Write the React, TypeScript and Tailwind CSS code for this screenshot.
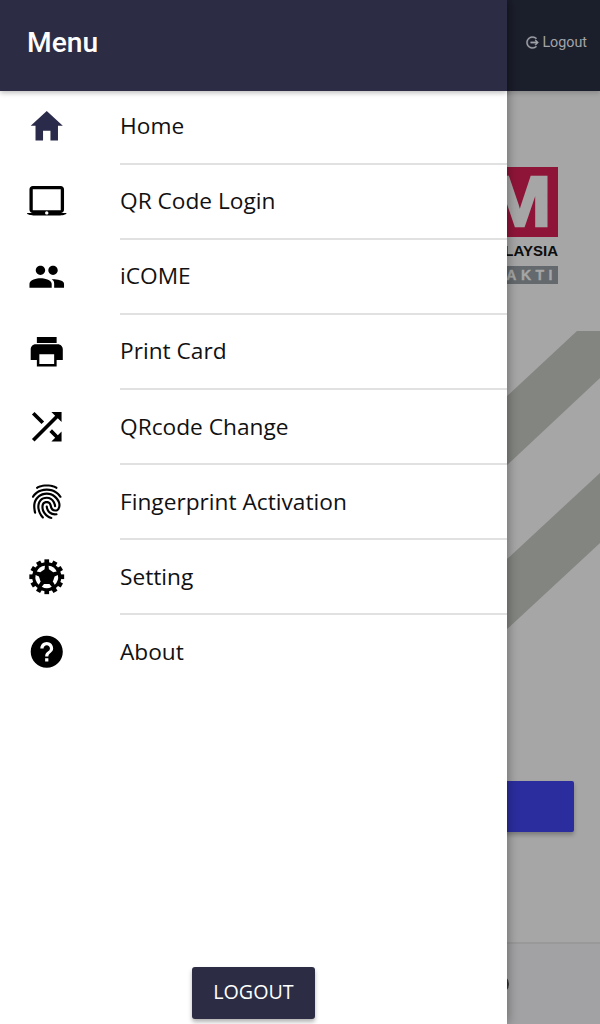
import type { ComponentType } from "react";
import {
  IoMdFingerPrint,
  IoMdHelpCircle,
  IoMdHome,
  IoMdLaptop,
  IoMdLogOut,
  IoMdPeople,
  IoMdPrint,
  IoMdShuffle,
} from "react-icons/io";

type MenuItem = { label: string; icon: ComponentType<{ className?: string }>; active?: boolean };

function GearIcon({ className }: { className?: string }) {
  return (
    <svg className={className} viewBox="-59 -59 118 118" fill="currentColor">
      <circle r="43.5" />
      {[0, 30, 60, 90, 120, 150].map((angle) => (
        <rect key={angle} x="-7" y="-52" width="14" height="104" transform={`rotate(${angle})`} />
      ))}
      {[0, 72, 144, 216, 288].map((angle) => (
        <path key={angle} d="M-8 22H8L15 30Q0 39-15 30Z" fill="white" transform={`rotate(${angle})`} />
      ))}
    </svg>
  );
}

const items: MenuItem[] = [
  { label: "Home", icon: IoMdHome, active: true },
  { label: "QR Code Login", icon: IoMdLaptop },
  { label: "iCOME", icon: IoMdPeople },
  { label: "Print Card", icon: IoMdPrint },
  { label: "QRcode Change", icon: IoMdShuffle },
  { label: "Fingerprint Activation", icon: IoMdFingerPrint },
  { label: "Setting", icon: GearIcon },
  { label: "About", icon: IoMdHelpCircle },
];

function Logo() {
  return (
    <div className="ml-auto mr-[42px] mt-[76px] flex h-[117px] w-[150px] flex-col items-end font-['Liberation_Sans',sans-serif] font-bold">
      <div className="flex h-[70px] w-[150px] shrink-0 items-center justify-end bg-[#8f1538] pr-[7px] text-[70px] leading-[70px] text-[#a6a6a6]">
        <span className="origin-right scale-x-[1.08] [-webkit-text-stroke:2.4px_#a6a6a6]">M</span>
      </div>
      <div className="mt-[5px] h-[18px] text-[15px] leading-[18px] text-[#0c0c0c]">MALAYSIA</div>
      <div className="mt-[6px] flex h-[18px] w-[150px] items-center justify-end bg-[#63696d] pr-px text-[14px] leading-[18px] tracking-[4.5px] text-[#a6a6a6] [-webkit-text-stroke:0.4px_#a6a6a6]">
        BAKTI
      </div>
    </div>
  );
}

function HomePage() {
  return (
    <div className="flex h-full w-full flex-col bg-[#a6a6a6]">
      <header className="z-10 flex h-[91px] shrink-0 items-center justify-end bg-[#1b1e2b] pb-[5px] pr-[13px] text-[#a3a4a9] shadow-[0_2px_5px_rgba(0,0,0,0.18)]">
        <IoMdLogOut className="mb-[2px] mr-[2px] size-[15px] stroke-current stroke-[12px]" />
        <span className="font-[Roboto,sans-serif] text-[14.3px]">Logout</span>
      </header>
      <Logo />
      <svg className="ml-auto mt-[47px] h-[299px] w-[94px] shrink-0" viewBox="506 331 94 299" fill="#838581">
        <path d="M506 397 577 331H600V378L506 466Z" />
        <path d="M506 560 600 473V543L506 630Z" />
      </svg>
      <div className="ml-[26px] mt-[151px] h-[51px] w-[548px] shrink-0 rounded-[2px] bg-[#2b2d9f] shadow-[0_3px_4px_rgba(0,0,0,0.25)]" />
      <footer className="mt-auto flex h-[82px] items-center justify-center border-t-2 border-[#999999] bg-[#a2a1a3]">
        <div className="ml-[397px] size-[20px] rounded-full bg-[#333333]" />
      </footer>
    </div>
  );
}

function Drawer() {
  return (
    <aside className="absolute inset-y-0 left-0 z-20 flex w-[507px] flex-col bg-white shadow-[0_0_11px_rgba(0,0,0,0.4)]">
      <header className="z-10 flex h-[91px] shrink-0 items-center bg-[#2c2d44] pb-[4px] pl-[27px] shadow-[0_2px_5px_rgba(0,0,0,0.25)]">
        <h1 className="font-[Roboto,sans-serif] text-[28.2px] font-medium text-white">Menu</h1>
      </header>
      <nav className="-mt-[1.6px] flex flex-col">
        {items.map(({ label, icon: Icon, active }, i) => (
          <a key={label} className="flex h-[75.15px] items-stretch">
            <span className="flex w-[120px] items-center pb-[2px] pl-[27px]">
              <Icon className={`size-[39.5px] ${active ? "text-[#2a2b4a]" : "text-black"}`} />
            </span>
            <span
              className={`flex flex-1 items-center border-b-2 font-['Open_Sans','Noto_Sans',sans-serif] text-[22.7px] text-[#111] ${
                i === items.length - 1 ? "border-transparent" : "border-[#e1e1e1]"
              }`}
            >
              {label}
            </span>
          </a>
        ))}
      </nav>
      <button className="mb-[5px] mt-auto h-[52px] w-[123px] self-center rounded-[3px] bg-[#2c2d44] pb-[2px] font-['Open_Sans','Noto_Sans',sans-serif] text-[19.7px] text-white shadow-[0_3px_4px_rgba(0,0,0,0.3)]">
        LOGOUT
      </button>
    </aside>
  );
}

export default function App() {
  return (
    <div className="relative h-[1024px] w-[600px] overflow-hidden">
      <HomePage />
      <Drawer />
    </div>
  );
}
